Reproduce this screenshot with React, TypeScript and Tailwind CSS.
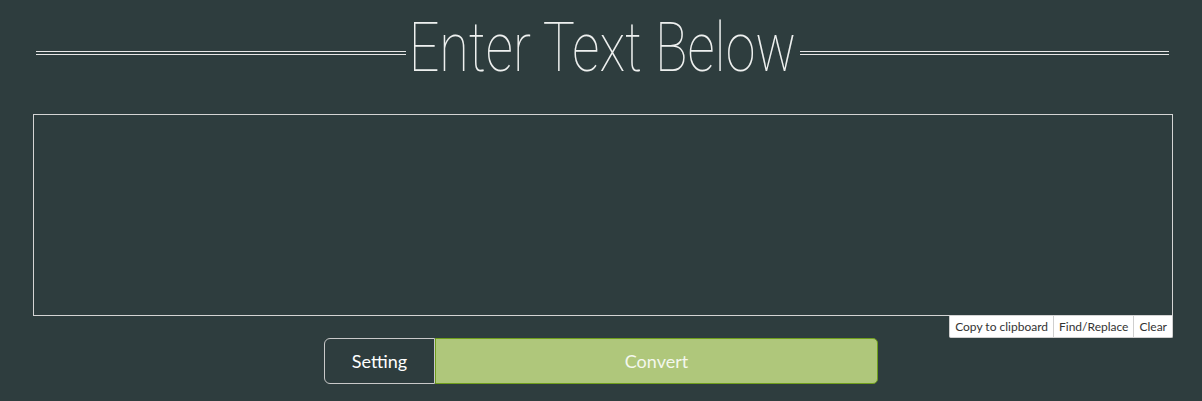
export default function App() {
  return (
    <div className="min-h-[401px] bg-[#2e3d3e] font-['Lato','Liberation_Sans',sans-serif]">
      <div className="flex h-[105px] items-center pl-[36px] pr-[33px]">
        <div className="mt-[1px] h-[4px] flex-1 border-y border-[#e6e6e6]" />
        <div className="flex w-[394px] justify-center overflow-visible">
          <h1 className="-mt-[10px] inline-block origin-center scale-x-[0.78] whitespace-nowrap font-['Roboto',sans-serif] text-[69px] font-thin leading-none text-[#eef0ef]">
            Enter Text Below
          </h1>
        </div>
        <div className="mt-[1px] h-[4px] flex-1 border-y border-[#e6e6e6]" />
      </div>
      <div className="pl-[33px] pr-[29px] pt-[9px]">
        <textarea className="block h-[202px] w-full resize-none border border-[#d4d4d4] bg-transparent p-2 text-white outline-none" />
        <div className="flex justify-end">
          <div className="flex h-[22px] overflow-hidden rounded-b-[2px] border border-t-0 border-[#cfcfcf] bg-white text-[12px] text-[#333]">
            <button className="px-[5px]">Copy to clipboard</button>
            <button className="border-l border-[#cfcfcf] px-[5px]">Find/Replace</button>
            <button className="border-l border-[#cfcfcf] px-[5px]">Clear</button>
          </div>
        </div>
        <div className="flex justify-center pr-[4px]">
          <div className="flex h-[46px] w-[554px]">
            <button className="w-[111px] rounded-l-[6px] border border-[#c9c9c9] text-[18px] text-white">
              Setting
            </button>
            <button className="flex-1 rounded-r-[5px] border border-[#6f9e1c] bg-[#afc77b] text-[18px] text-[#f4f7ee]">
              Convert
            </button>
          </div>
        </div>
      </div>
    </div>
  );
}
